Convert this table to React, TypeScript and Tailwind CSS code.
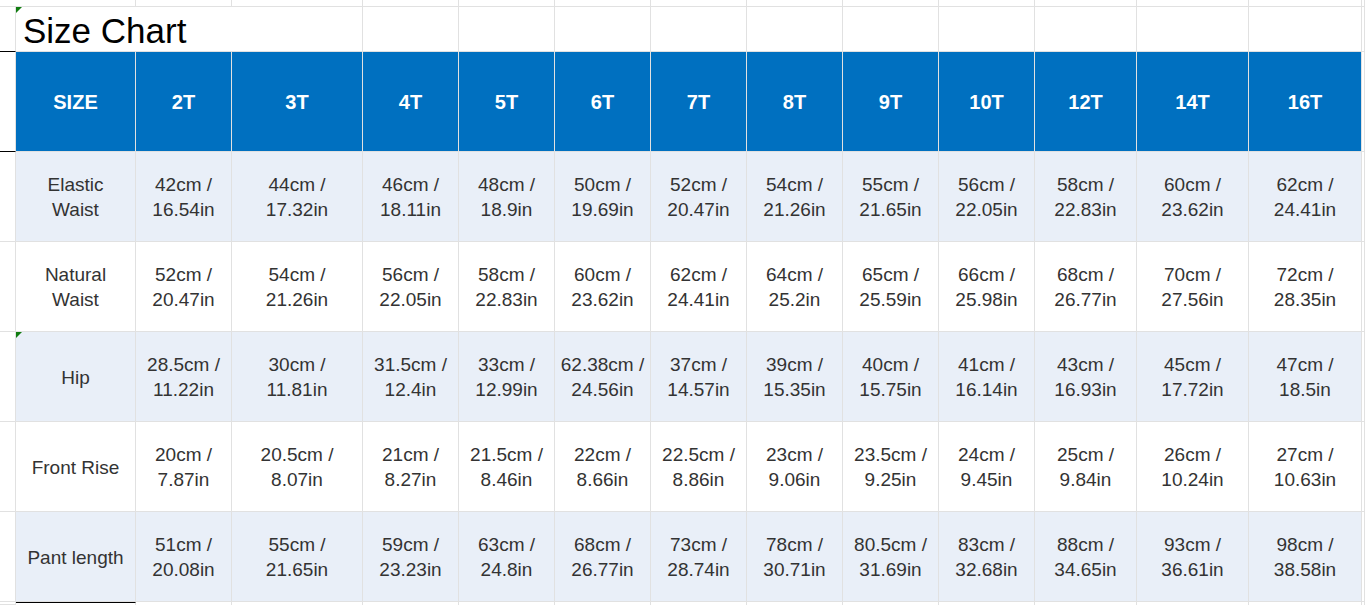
const sizes = ['2T', '3T', '4T', '5T', '6T', '7T', '8T', '9T', '10T', '12T', '14T', '16T'];

const rows: { label: string[]; values: [string, string][]; shaded: boolean; mark?: boolean }[] = [
  {
    label: ['Elastic', 'Waist'],
    shaded: true,
    values: [
      ['42', '16.54'], ['44', '17.32'], ['46', '18.11'], ['48', '18.9'], ['50', '19.69'], ['52', '20.47'],
      ['54', '21.26'], ['55', '21.65'], ['56', '22.05'], ['58', '22.83'], ['60', '23.62'], ['62', '24.41'],
    ],
  },
  {
    label: ['Natural', 'Waist'],
    shaded: false,
    values: [
      ['52', '20.47'], ['54', '21.26'], ['56', '22.05'], ['58', '22.83'], ['60', '23.62'], ['62', '24.41'],
      ['64', '25.2'], ['65', '25.59'], ['66', '25.98'], ['68', '26.77'], ['70', '27.56'], ['72', '28.35'],
    ],
  },
  {
    label: ['Hip'],
    shaded: true,
    mark: true,
    values: [
      ['28.5', '11.22'], ['30', '11.81'], ['31.5', '12.4'], ['33', '12.99'], ['62.38', '24.56'], ['37', '14.57'],
      ['39', '15.35'], ['40', '15.75'], ['41', '16.14'], ['43', '16.93'], ['45', '17.72'], ['47', '18.5'],
    ],
  },
  {
    label: ['Front Rise'],
    shaded: false,
    values: [
      ['20', '7.87'], ['20.5', '8.07'], ['21', '8.27'], ['21.5', '8.46'], ['22', '8.66'], ['22.5', '8.86'],
      ['23', '9.06'], ['23.5', '9.25'], ['24', '9.45'], ['25', '9.84'], ['26', '10.24'], ['27', '10.63'],
    ],
  },
  {
    label: ['Pant length'],
    shaded: true,
    values: [
      ['51', '20.08'], ['55', '21.65'], ['59', '23.23'], ['63', '24.8'], ['68', '26.77'], ['73', '28.74'],
      ['78', '30.71'], ['80.5', '31.69'], ['83', '32.68'], ['88', '34.65'], ['93', '36.61'], ['98', '38.58'],
    ],
  },
];

const cell = 'border-r border-b border-[#e1e1e1]';

function Mark() {
  return (
    <span className="absolute left-0 top-0 w-0 h-0 border-t-[6px] border-r-[6px] border-t-[#107c10] border-r-transparent" />
  );
}

export default function App() {
  return (
    <div
      className="w-[1365px] h-[605px] overflow-hidden bg-white text-[#333333]"
      style={{ fontFamily: '"Liberation Sans", Arial, sans-serif' }}
    >
      <div className="grid grid-cols-[16px_120px_96px_131px_96px_96px_96px_96px_96px_96px_96px_102px_112px_113px_1fr] grid-rows-[7px_45px_100px_90px_90px_90px_90px_90px_1fr] h-full">
        {/* top strip */}
        {Array.from({ length: 15 }).map((_, i) => (
          <div key={`t${i}`} className={i === 0 ? 'border-b border-[#e1e1e1]' : cell} />
        ))}

        {/* title row */}
        <div className="border-r border-b border-b-black border-r-[#e1e1e1]" />
        <div className="relative col-span-2 flex items-end pl-[7px] border-b border-[#e1e1e1] text-black text-[35px] leading-[41px] whitespace-nowrap">
          <Mark />
          Size Chart
        </div>
        {Array.from({ length: 12 }).map((_, i) => (
          <div key={`h${i}`} className={cell} />
        ))}

        {/* header row */}
        <div className="border-r border-b border-b-black border-r-[#e1e1e1]" />
        <div className={`${cell} bg-[#0070c0] flex items-center justify-center text-white font-bold text-[20px]`}>SIZE</div>
        {sizes.map(s => (
          <div key={s} className={`${cell} bg-[#0070c0] flex items-center justify-center text-white font-bold text-[20px]`}>
            {s}
          </div>
        ))}
        <div className={cell} />

        {/* data rows */}
        {rows.map((row, r) => {
          const bg = row.shaded ? 'bg-[#e9eff8]' : 'bg-white';
          return [
            <div key={`a${r}`} className={cell} />,
            <div
              key={`l${r}`}
              className={`${cell} ${bg} relative flex flex-col items-center justify-center pt-px text-[19px] leading-[25px] whitespace-nowrap`}
            >
              {row.mark && <Mark />}
              {row.label.map(l => (
                <span key={l}>{l}</span>
              ))}
            </div>,
            ...row.values.map(([cm, inch], i) => (
              <div
                key={`v${r}-${i}`}
                className={`${cell} ${bg} flex flex-col items-center justify-center pt-px text-[19px] leading-[25px] whitespace-nowrap`}
              >
                <span>{cm}cm /</span>
                <span>{inch}in</span>
              </div>
            )),
            <div key={`z${r}`} className={cell} />,
          ];
        })}

        {/* bottom strip */}
        <div className={cell} />
        <div className="border-r border-[#e1e1e1] border-t border-t-black" />
        {Array.from({ length: 13 }).map((_, i) => (
          <div key={`b${i}`} className="border-r border-[#e1e1e1]" />
        ))}
      </div>
    </div>
  );
}
